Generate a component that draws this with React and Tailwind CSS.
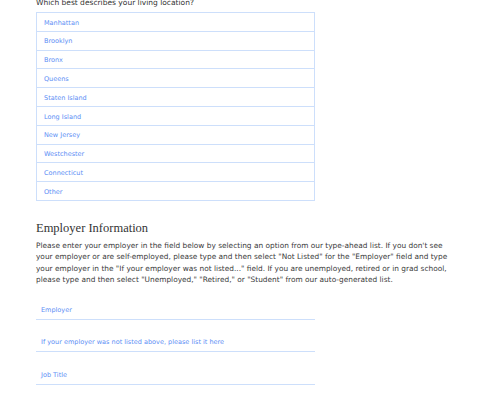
import React from "react";

const places = [
  "Manhattan",
  "Brooklyn",
  "Bronx",
  "Queens",
  "Staten Island",
  "Long Island",
  "New Jersey",
  "Westchester",
  "Connecticut",
  "Other",
];

const fields = [
  "Employer",
  "If your employer was not listed above, please list it here",
  "Job Title",
];

export default function App() {
  return (
    <div
      className="w-[500px] h-[393px] overflow-hidden bg-white pl-[36px]"
      style={{ fontFamily: '"DejaVu Sans", Verdana, sans-serif' }}
    >
      <div className="mt-[-2px] h-[10px] leading-[10px] text-[7.5px] text-[#333]">
        Which best describes your living location?
      </div>
      <div className="mt-[4px] w-[279px] border border-[#cddffb] divide-y divide-[#cddffb]">
        {places.map((p) => (
          <div
            key={p}
            className="h-[16.3px] box-content flex items-center pl-[7px] pt-[1.5px] text-[6.5px] leading-[8px] text-[#5b8ef5]"
          >
            {p}
          </div>
        ))}
      </div>
      <h2
        className="mt-[20px] h-[15px] leading-[15px] text-[12.5px] text-[#333] font-normal"
        style={{ fontFamily: 'Georgia, "Liberation Serif", serif' }}
      >
        Employer Information
      </h2>
      <p className="mt-[4px] w-[460px] leading-[11.5px] text-[7.4px] text-[#3a3a3a]">
        Please enter your employer in the field below by selecting an option from our type-ahead list. If you don't see
        <br />
        your employer or are self-employed, please type and then select "Not Listed" for the "Employer" field and type
        <br />
        your employer in the "If your employer was not listed..." field. If you are unemployed, retired or in grad school,
        <br />
        please type and then select "Unemployed," "Retired," or "Student" from our auto-generated list.
      </p>
      <div className="mt-[1.5px] w-[279px] flex flex-col">
        {fields.map((f) => (
          <div
            key={f}
            className="h-[32.5px] flex items-end pb-[4px] pl-[5px] border-b border-[#cddffb] text-[6.5px] leading-[10px] text-[#5b8ef5]"
          >
            {f}
          </div>
        ))}
      </div>
    </div>
  );
}
